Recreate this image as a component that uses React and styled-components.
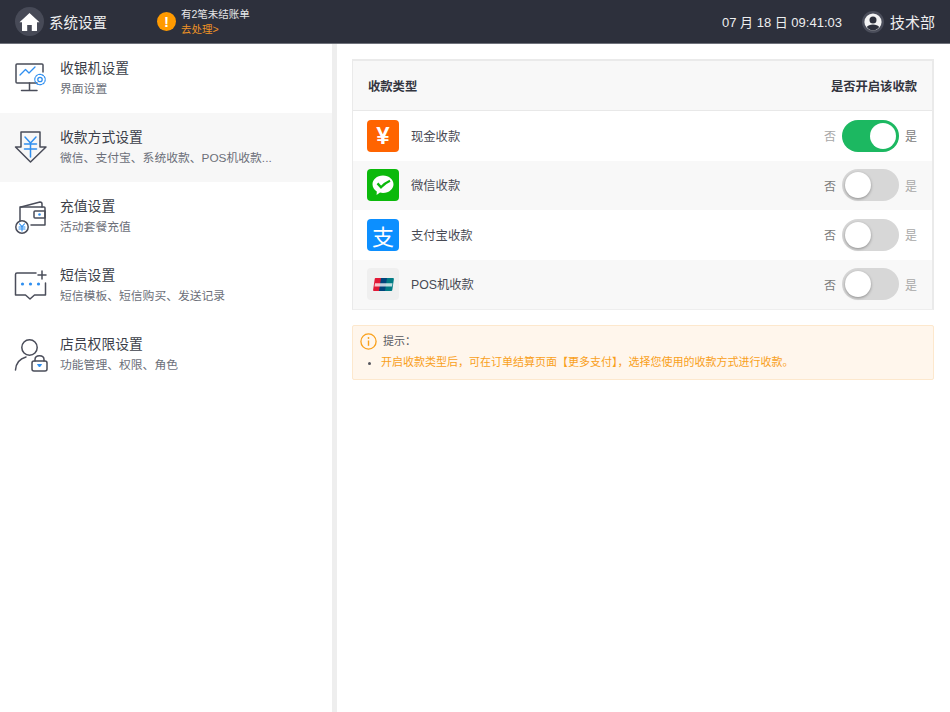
import React from 'react';
import styled, {createGlobalStyle} from 'styled-components';

const GlobalStyle = createGlobalStyle`
    html, body {
        margin: 0;
        padding: 0;
        height: 100%;
        background: #ffffff;
        font-family: 'Liberation Sans', 'Noto Sans CJK SC', sans-serif;
    }
    * {
        box-sizing: border-box;
    }
`;

const Page = styled.div`
    width: 950px;
    height: 712px;
    display: flex;
    flex-direction: column;
    overflow: hidden;
`;

const Header = styled.header`
    height: 44px;
    flex-shrink: 0;
    display: flex;
    align-items: center;
    padding: 0 15px;
    background: #2d303c;
    border-bottom: 1px solid #6f727b;
    color: #ffffff;
`;

const HomeBadge = styled.div`
    width: 29px;
    height: 29px;
    border-radius: 50%;
    background: #474a57;
    display: flex;
    align-items: center;
    justify-content: center;
    flex-shrink: 0;
`;

const HeaderTitle = styled.div`
    font-size: 14.5px;
    margin-left: 5px;
    width: 108px;
    color: #eeeeef;
`;

const AlertDot = styled.div`
    width: 19px;
    height: 19px;
    border-radius: 50%;
    background: #ff9a00;
    color: #ffffff;
    font-size: 15px;
    font-weight: bold;
    display: flex;
    align-items: center;
    justify-content: center;
    flex-shrink: 0;
`;

const AlertText = styled.div`
    margin-left: 5px;
    font-size: 10.5px;
    line-height: 15px;
    color: #e6e6e8;
`;

const AlertLink = styled.div`
    color: #ef9326;
`;

const HeaderRight = styled.div`
    margin-left: auto;
    display: flex;
    align-items: center;
`;

const Clock = styled.div`
    font-size: 13px;
    color: #eeeeef;
    margin-right: 20px;
    white-space: nowrap;
`;

const UserName = styled.div`
    font-size: 15px;
    margin-left: 6px;
    color: #eeeeef;
`;

const Body = styled.div`
    flex: 1;
    display: flex;
    min-height: 0;
`;

const Sidebar = styled.nav`
    width: 337px;
    flex-shrink: 0;
    border-right: 5px solid #eeeeee;
`;

const MenuItem = styled.div`
    height: 69px;
    display: flex;
    align-items: center;
    padding-left: 14px;
    background: ${props => (props.$active ? '#f7f7f7' : '#ffffff')};
`;

const MenuIcon = styled.div`
    width: 34px;
    height: 36px;
    flex-shrink: 0;
    margin-right: 12px;
`;

const MenuTitle = styled.div`
    font-size: 13.8px;
    line-height: 20px;
    color: #3c3f4a;
`;

const MenuSub = styled.div`
    font-size: 11.8px;
    line-height: 17px;
    margin-top: 2px;
    color: #6c6f79;
`;

const Content = styled.main`
    flex: 1;
    padding: 15px 16px 0 15px;
`;

const Table = styled.section`
    border: 1px solid #eaeaea;
    border-top-width: 2px;
    border-right-width: 2px;
    border-bottom: 1px solid #eeeeee;
`;

const TableHead = styled.div`
    height: 50px;
    display: flex;
    align-items: center;
    justify-content: space-between;
    padding: 0 15px;
    background: #f8f8f8;
    border-bottom: 1px solid #e8e8e8;
    font-size: 12.3px;
    font-weight: bold;
    color: #33353f;
`;

const Row = styled.div`
    height: 49.5px;
    display: flex;
    align-items: center;
    padding: 0 15px 0 14px;
    background: ${props => (props.$even ? '#f8f8f8' : '#ffffff')};
`;

const PayIcon = styled.div`
    width: 32px;
    height: 32px;
    border-radius: 4px;
    background: ${props => props.$bg};
    color: #ffffff;
    display: flex;
    align-items: center;
    justify-content: center;
    flex-shrink: 0;
    font-size: ${props => props.$size || 22}px;
    font-weight: ${props => props.$weight || 'normal'};
`;

const RowName = styled.div`
    margin-left: 12px;
    font-size: 12.3px;
    color: #484a54;
`;

const SwitchGroup = styled.div`
    margin-left: auto;
    display: flex;
    align-items: center;
    gap: 6px;
    font-size: 12px;
    color: #9a9a9a;
`;

const SwitchLabel = styled.span`
    color: ${props => (props.$dim ? '#a8a8a8' : '#7c7c7c')};
`;

const Track = styled.div`
    width: 57px;
    height: 32px;
    border-radius: 16px;
    padding: 3px;
    display: flex;
    justify-content: ${props => (props.$on ? 'flex-end' : 'flex-start')};
    background: ${props => (props.$on ? '#1cb861' : '#d7d7d7')};
`;

const Knob = styled.div`
    width: 26px;
    height: 26px;
    border-radius: 50%;
    background: #ffffff;
    box-shadow: ${props => (props.$on ? 'none' : '0 1px 3px rgba(0, 0, 0, 0.35)')};
`;

const Tip = styled.section`
    margin-top: 15px;
    height: 55px;
    padding: 7px 7px;
    background: #fff6ec;
    border: 1px solid #fde8cd;
    border-radius: 2px;
`;

const TipHead = styled.div`
    display: flex;
    align-items: center;
    gap: 6px;
    font-size: 11px;
    line-height: 17px;
    color: #55565e;
`;

const TipList = styled.ul`
    margin: 4px 0 0;
    padding-left: 21px;
    color: #55565e;
    font-size: 11px;
    line-height: 16px;
`;

const TipText = styled.span`
    color: #f9a01b;
`;

const HomeIcon = () => (
    <svg width="21" height="20" viewBox="0 0 21 20">
        <path d="M10.5 1 L20.5 10.2 L18 10.2 L18 19 L12.8 19 L12.8 13 L8.2 13 L8.2 19 L3 19 L3 10.2 L.5 10.2 Z" fill="#fff" />
    </svg>
);

const UserIcon = () => (
    <svg width="22" height="22" viewBox="0 0 22 22">
        <circle cx="11" cy="11" r="11" fill="#4b4e5b" />
        <circle cx="11" cy="11" r="8.6" fill="#f3f3f4" />
        <circle cx="11" cy="9" r="3.5" fill="#2d303c" />
        <path d="M4.8 16 C6.5 12.6 15.5 12.6 17.2 16 C15.6 18.2 13.4 19.4 11 19.4 C8.6 19.4 6.4 18.2 4.8 16 Z" fill="#2d303c" />
    </svg>
);

const line = {fill: 'none', stroke: '#4a4d5a', strokeWidth: 1.5, strokeLinecap: 'round', strokeLinejoin: 'round'};
const blue = {fill: 'none', stroke: '#2f8ff0', strokeWidth: 1.3, strokeLinecap: 'round', strokeLinejoin: 'round'};

const MonitorIcon = () => (
    <svg width="34" height="36" viewBox="0 0 34 36">
        <path d="M23 22 H3 Q2 22 2 21 V4 Q2 3 3 3 H28 Q29 3 29 4 V11" {...line} />
        <path d="M15.5 22 V29 M7.5 29.5 H23" {...line} />
        <path d="M6 14 L11.5 8.5 L15 12 L21 6" {...blue} />
        <circle cx="26" cy="18.5" r="2.2" {...blue} />
        <circle cx="26" cy="18.5" r="5.2" {...blue} strokeWidth="1.2" strokeDasharray="2 1.2" />
    </svg>
);

const ArrowIcon = () => (
    <svg width="34" height="36" viewBox="0 0 34 36">
        <path d="M7 2 H26 V17 H32 L16.5 32 L1.5 17 H7 Z" {...line} />
        <path d="M11 7 L16.5 13 L22 7 M10.5 14 H22.5 M10.5 19 H22.5 M16.5 13 V27" {...blue} strokeWidth="1.5" />
    </svg>
);

const WalletIcon = () => (
    <svg width="34" height="36" viewBox="0 0 34 36">
        <path d="M6 24 V9 Q6 8 7 8 L26 3 Q28 3 28 5 V8" {...line} />
        <path d="M6 8 H30 Q31 8 31 9 V26 H17" {...line} />
        <path d="M21 12 H31 V19 H21 Q20 19 20 18 V13 Q20 12 21 12 Z" {...line} />
        <circle cx="25.5" cy="15.5" r="1.3" fill="#2f8ff0" />
        <circle cx="8" cy="28" r="6.2" fill="#fff" stroke="#4a4d5a" strokeWidth="1.5" />
        <path d="M5.5 24.8 L8 27.5 L10.5 24.8 M5 28 H11 M5 30 H11 M8 27.5 V32" {...blue} strokeWidth="1.1" />
    </svg>
);

const MessageIcon = () => (
    <svg width="34" height="36" viewBox="0 0 34 36">
        <path d="M22 5 H3 Q1.5 5 1.5 6.5 V27 H11.5 L16 31 L20.5 27 H31.5 V15" {...line} />
        <path d="M28 3 V11 M24 7 H32" {...line} />
        <circle cx="8.5" cy="16" r="1.6" fill="#2f8ff0" />
        <circle cx="16.5" cy="16" r="1.6" fill="#2f8ff0" />
        <circle cx="24.5" cy="16" r="1.6" fill="#2f8ff0" />
    </svg>
);

const StaffIcon = () => (
    <svg width="34" height="36" viewBox="0 0 34 36">
        <circle cx="15.5" cy="10.5" r="7.7" {...line} />
        <path d="M1.5 33 C2 26 6.5 21.5 12 20" {...line} />
        <path d="M21 24 V22.5 C21 17.5 30 17.5 30 22.5 V24" {...line} />
        <rect x="18" y="24" width="15" height="10" rx="2" {...line} />
        <path d="M23.5 27.5 H27.5 L25.5 30 Z" fill="#2f8ff0" stroke="#2f8ff0" strokeWidth="1" strokeLinejoin="round" />
    </svg>
);

const WechatMark = () => (
    <svg width="24" height="23" viewBox="0 0 24 23">
        <path d="M12 1.5 C18.2 1.5 22.5 5.6 22.5 10.3 C22.5 15 18.2 19 12 19 C10.9 19 9.9 18.9 9 18.6 L5.6 21 L5.8 17.4 C3 15.8 1.5 13.2 1.5 10.3 C1.5 5.6 5.8 1.5 12 1.5 Z" fill="#fff" />
        <path d="M6.5 9.4 L10 13.2 C12.5 10.6 15.5 8.4 19 6.8" fill="none" stroke="#0bb90b" strokeWidth="2.3" />
    </svg>
);

const UnionPayMark = () => (
    <svg width="21" height="13" viewBox="0 0 21 13">
        <path d="M2.5 0 H9 L7 13 H0.8 Q0 13 .1 12 L1.7 1 Q1.8 0 2.5 0 Z" fill="#e21836" />
        <path d="M8 0 H15 L13 13 H6 Z" fill="#00447c" />
        <path d="M14 0 H20 Q21 0 20.9 1 L19.3 12 Q19.2 13 18.3 13 H12 Z" fill="#007b84" />
        <path d="M2 5.2 H19.5 L19 8.4 H1.5 Z" fill="#fff" opacity="0.75" />
    </svg>
);

const InfoIcon = () => (
    <svg width="17" height="17" viewBox="0 0 17 17">
        <circle cx="8.5" cy="8.5" r="7.6" fill="none" stroke="#f9a01b" strokeWidth="1.3" />
        <path d="M8.5 7.5 V12.8" stroke="#f9a01b" strokeWidth="1.4" />
        <circle cx="8.5" cy="5" r="0.9" fill="#f9a01b" />
    </svg>
);

const menu = [
    {title: '收银机设置', sub: '界面设置', icon: <MonitorIcon />},
    {title: '收款方式设置', sub: '微信、支付宝、系统收款、POS机收款...', icon: <ArrowIcon />, active: true},
    {title: '充值设置', sub: '活动套餐充值', icon: <WalletIcon />},
    {title: '短信设置', sub: '短信模板、短信购买、发送记录', icon: <MessageIcon />},
    {title: '店员权限设置', sub: '功能管理、权限、角色', icon: <StaffIcon />},
];

const payments = [
    {name: '现金收款', bg: '#ff6400', mark: '¥', size: 24, weight: 'bold', on: true},
    {name: '微信收款', bg: '#0bb90b', mark: <WechatMark />},
    {name: '支付宝收款', bg: '#0c8fff', mark: '支', size: 22},
    {name: 'POS机收款', bg: '#efefef', mark: <UnionPayMark />},
];

const App = () => {
    return <Page>
        <GlobalStyle />
        <Header>
            <HomeBadge><HomeIcon /></HomeBadge>
            <HeaderTitle>系统设置</HeaderTitle>
            <AlertDot>!</AlertDot>
            <AlertText>
                有2笔未结账单
                <AlertLink>去处理&gt;</AlertLink>
            </AlertText>
            <HeaderRight>
                <Clock>07 月 18 日 09:41:03</Clock>
                <UserIcon />
                <UserName>技术部</UserName>
            </HeaderRight>
        </Header>
        <Body>
            <Sidebar>
                {menu.map(item => (
                    <MenuItem key={item.title} $active={item.active}>
                        <MenuIcon>{item.icon}</MenuIcon>
                        <div>
                            <MenuTitle>{item.title}</MenuTitle>
                            <MenuSub>{item.sub}</MenuSub>
                        </div>
                    </MenuItem>
                ))}
            </Sidebar>
            <Content>
                <Table>
                    <TableHead>
                        <span>收款类型</span>
                        <span>是否开启该收款</span>
                    </TableHead>
                    {payments.map((pay, i) => (
                        <Row key={pay.name} $even={i % 2 === 1}>
                            <PayIcon $bg={pay.bg} $size={pay.size} $weight={pay.weight}>{pay.mark}</PayIcon>
                            <RowName>{pay.name}</RowName>
                            <SwitchGroup>
                                <SwitchLabel $dim={pay.on}>否</SwitchLabel>
                                <Track $on={pay.on}><Knob $on={pay.on} /></Track>
                                <SwitchLabel $dim={!pay.on}>是</SwitchLabel>
                            </SwitchGroup>
                        </Row>
                    ))}
                </Table>
                <Tip>
                    <TipHead><InfoIcon />提示：</TipHead>
                    <TipList>
                        <li><TipText>开启收款类型后，可在订单结算页面【更多支付】，选择您使用的收款方式进行收款。</TipText></li>
                    </TipList>
                </Tip>
            </Content>
        </Body>
    </Page>
}

export default App;
